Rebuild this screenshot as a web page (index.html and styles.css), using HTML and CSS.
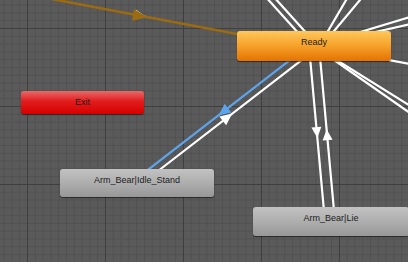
FILE: index.html
```html
<!DOCTYPE html>
<html>
<head>
<meta charset="utf-8">
<link rel="stylesheet" href="styles.css">
</head>
<body>
<div class="canvas">
  <svg class="edges" width="408" height="262" viewBox="0 0 408 262">
    <defs>
      <polygon id="arrW" points="6,0 -5,-5 -5,5" fill="#ffffff"/>
      <polygon id="arrB" points="6,0 -5,-5 -5,5" fill="#5ea4ec"/>
    </defs>
    <!-- brown incoming transition -->
    <line x1="-20" y1="-14.5" x2="314" y2="48.5" stroke="#9c6a10" stroke-width="2.5"/>
    <use href="#arrW" transform="translate(140 15.7) rotate(10.7)" fill="#9c6a10" style="fill:#9c6a10"/>
    <polygon points="147,17 134,9 132,21" fill="#9c6a10"/>

    <!-- white lines from Ready -->
    <g stroke="#ffffff" stroke-width="2.2" fill="none">
      <g transform="translate(314 46) rotate(-132)">
        <line x1="0" y1="3" x2="120" y2="3"/>
        <line x1="0" y1="-3" x2="120" y2="-3"/>
      </g>
      <line x1="314" y1="55" x2="352" y2="-10"/>
      <line x1="314" y1="55" x2="370" y2="-12"/>
      <line x1="314" y1="46" x2="420" y2="14"/>
      <line x1="314" y1="46" x2="420" y2="22"/>
      <line x1="314" y1="46" x2="420" y2="66"/>
      <line x1="314" y1="46" x2="420" y2="120"/>
      <line x1="314" y1="46" x2="420" y2="112"/>
    </g>

    <!-- to Idle_Stand -->
    <g transform="translate(314 46) rotate(142.3)">
      <line x1="0" y1="3.5" x2="224" y2="3.5" stroke="#5ea4ec" stroke-width="2.2"/>
      <line x1="0" y1="-3.5" x2="224" y2="-3.5" stroke="#ffffff" stroke-width="2.2"/>
      <polygon points="118,3.5 106,-2 106,9" fill="#5ea4ec"/>
      <polygon points="106,-3.5 118,-9 118,2" fill="#ffffff"/>
    </g>

    <!-- to Lie -->
    <g transform="translate(314 46) rotate(84.8)">
      <line x1="0" y1="5" x2="176" y2="5" stroke="#ffffff" stroke-width="2.2"/>
      <line x1="0" y1="-5" x2="176" y2="-5" stroke="#ffffff" stroke-width="2.2"/>
      <polygon points="92,5 81,0 81,10" fill="#ffffff"/>
      <polygon points="84,-5 95,-10 95,0" fill="#ffffff"/>
    </g>
  </svg>

  <div class="node ready">Ready</div>
  <div class="node exit">Exit</div>
  <div class="node idle">Arm_Bear|Idle_Stand</div>
  <div class="node lie">Arm_Bear|Lie</div>
</div>
</body>
</html>
```

FILE: styles.css
```css
html, body {
  margin: 0;
  padding: 0;
  width: 408px;
  height: 262px;
  overflow: hidden;
  background: #595959;
}

.canvas {
  position: relative;
  width: 408px;
  height: 262px;
  overflow: hidden;
  background-color: #5a5a5a;
  background-image:
    linear-gradient(to right, #3f3f3f 1px, transparent 1px),
    linear-gradient(to bottom, #3f3f3f 1px, transparent 1px),
    linear-gradient(to right, #515151 1px, transparent 1px),
    linear-gradient(to bottom, #515151 1px, transparent 1px);
  background-size: 78px 78px, 78px 78px, 7.8px 7.8px, 7.8px 7.8px;
  background-position: 27px 28px, 27px 28px, 3.6px 4.6px, 3.6px 4.6px;
}

.edges {
  position: absolute;
  left: 0;
  top: 0;
}

.node {
  position: absolute;
  box-sizing: border-box;
  border-radius: 3px;
  font-family: "Liberation Sans", Arial, sans-serif;
  font-size: 9px;
  line-height: 22px;
  color: #1c1c1c;
  text-align: center;
  box-shadow: 0 1px 1px rgba(0, 0, 0, 0.55);
}

.ready {
  left: 237px;
  top: 31px;
  width: 154px;
  height: 30px;
  background: linear-gradient(to bottom, #ffc85c 0%, #f7a52e 45%, #e57300 100%);
}

.exit {
  left: 21px;
  top: 91px;
  width: 123px;
  height: 23px;
  background: linear-gradient(to bottom, #e96a6a 0%, #e21c1c 45%, #d60000 100%);
}

.idle {
  left: 60px;
  top: 169px;
  width: 154px;
  height: 28px;
  background: linear-gradient(to bottom, #c2c2c2 0%, #aeaeae 50%, #979797 100%);
}

.lie {
  left: 253px;
  top: 207px;
  width: 156px;
  height: 29px;
  background: linear-gradient(to bottom, #c2c2c2 0%, #aeaeae 50%, #979797 100%);
}
```
